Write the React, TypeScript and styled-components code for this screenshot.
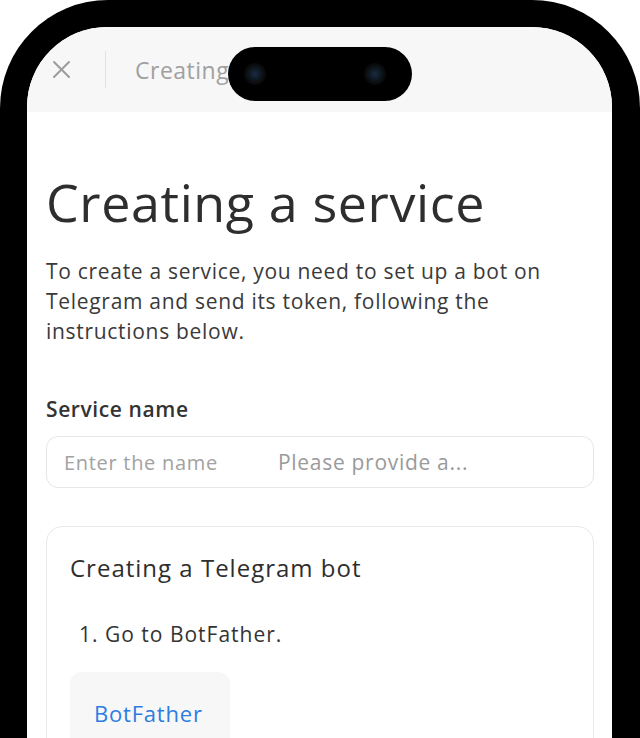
import React from "react";
import styled, { createGlobalStyle } from "styled-components";

const Global = createGlobalStyle`
  html, body { margin: 0; padding: 0; background: #ffffff; }
  body { font-family: "Open Sans", "Noto Sans", sans-serif; -webkit-font-smoothing: antialiased; }
`;

const Page = styled.div`
  width: 640px;
  height: 738px;
  overflow: hidden;
  background: #ffffff;
`;

const Frame = styled.div`
  position: relative;
  width: 640px;
  height: 738px;
  box-sizing: border-box;
  background: #000;
  border-radius: 108px 108px 0 0;
  padding: 27px 28px 0 27px;
`;

const Screen = styled.div`
  height: 100%;
  background: #fff;
  border-radius: 80px 80px 0 0;
  overflow: hidden;
  display: flex;
  flex-direction: column;
`;

const Header = styled.div`
  height: 85px;
  flex: none;
  background: #f7f7f7;
  display: flex;
  align-items: center;
  padding-left: 24px;
`;

const CloseButton = styled.div`
  width: 20px;
  height: 20px;
  display: flex;
  align-items: center;
  justify-content: center;
`;

const Divider = styled.div`
  width: 1px;
  height: 37px;
  background: #e2e2e2;
  margin: 0 29px 0 34px;
`;

const HeaderTitle = styled.div`
  font-size: 23px;
  letter-spacing: 0.5px;
  color: #a0a0a0;
  font-weight: 400;
  white-space: nowrap;
`;

const Island = styled.div`
  position: absolute;
  left: 228px;
  top: 47px;
  width: 184px;
  height: 54px;
  border-radius: 27px;
  background: #000;
`;

const Lens = styled.div<{ $left: number }>`
  position: absolute;
  top: 16px;
  left: ${(p) => p.$left}px;
  width: 22px;
  height: 22px;
  border-radius: 50%;
  background: radial-gradient(circle at 50% 50%, #1d2a44 0%, #0e1a22 35%, #0b0b0d 60%, #000 100%);
`;

const Body = styled.div`
  padding: 0 18px 0 19px;
  display: flex;
  flex-direction: column;
  color: #333;
`;

const Title = styled.h1`
  margin: 60px 0 0;
  font-size: 52px;
  line-height: 60px;
  font-weight: 500;
  color: #2e2e2e;
  letter-spacing: 0.6px;
`;

const Lead = styled.p`
  margin: 24px 0 0;
  font-size: 21px;
  line-height: 30px;
  letter-spacing: 0.7px;
  color: #3a3a3a;
  padding-right: 40px;
`;

const Label = styled.div`
  margin-top: 49px;
  font-size: 21px;
  line-height: 28px;
  letter-spacing: 0.6px;
  font-weight: 600;
  color: #333;
`;

const Input = styled.div`
  margin-top: 13px;
  height: 52px;
  box-sizing: border-box;
  border: 1px solid #e6e6e6;
  border-radius: 12px;
  display: flex;
  align-items: center;
  padding-left: 17px;
`;

const Placeholder = styled.span`
  font-size: 20px;
  letter-spacing: 0.7px;
  color: #a2a2a2;
  width: 214px;
`;

const Hint = styled.span`
  font-size: 21px;
  letter-spacing: 0.7px;
  color: #9a9a9a;
`;

const Card = styled.div`
  margin-top: 38px;
  border: 1px solid #e8e8e8;
  border-radius: 16px;
  padding: 25px 23px 0;
  height: 260px;
`;

const CardTitle = styled.div`
  font-size: 24px;
  line-height: 32px;
  letter-spacing: 1px;
  font-weight: 500;
  color: #2e2e2e;
`;

const Step = styled.div`
  margin-top: 36px;
  padding-left: 9px;
  font-size: 21px;
  line-height: 28px;
  letter-spacing: 1px;
  color: #333;
`;

const LinkButton = styled.div`
  margin-top: 24px;
  width: 160px;
  height: 90px;
  box-sizing: border-box;
  background: #f7f7f8;
  border-radius: 12px;
  padding: 27px 0 0 24px;
  font-size: 22px;
  line-height: 28px;
  letter-spacing: 0.8px;
  color: #2b7de3;
`;

export default function App() {
  return (
    <Page>
      <Global />
      <Frame>
        <Screen>
          <Header>
            <CloseButton>
              <svg width="19" height="19" viewBox="0 0 19 19" fill="none">
                <path d="M2 2 L17 17 M17 2 L2 17" stroke="#9c9c9c" strokeWidth="2" strokeLinecap="round" />
              </svg>
            </CloseButton>
            <Divider />
            <HeaderTitle>Creating a service</HeaderTitle>
          </Header>
          <Body>
            <Title>Creating a service</Title>
            <Lead>
              To create a service, you need to set up a bot on Telegram and send its token, following the
              instructions below.
            </Lead>
            <Label>Service name</Label>
            <Input>
              <Placeholder>Enter the name</Placeholder>
              <Hint>Please provide a...</Hint>
            </Input>
            <Card>
              <CardTitle>Creating a Telegram bot</CardTitle>
              <Step>1. Go to BotFather.</Step>
              <LinkButton>BotFather</LinkButton>
            </Card>
          </Body>
        </Screen>
        <Island>
          <Lens $left={16} />
          <Lens $left={136} />
        </Island>
      </Frame>
    </Page>
  );
}
